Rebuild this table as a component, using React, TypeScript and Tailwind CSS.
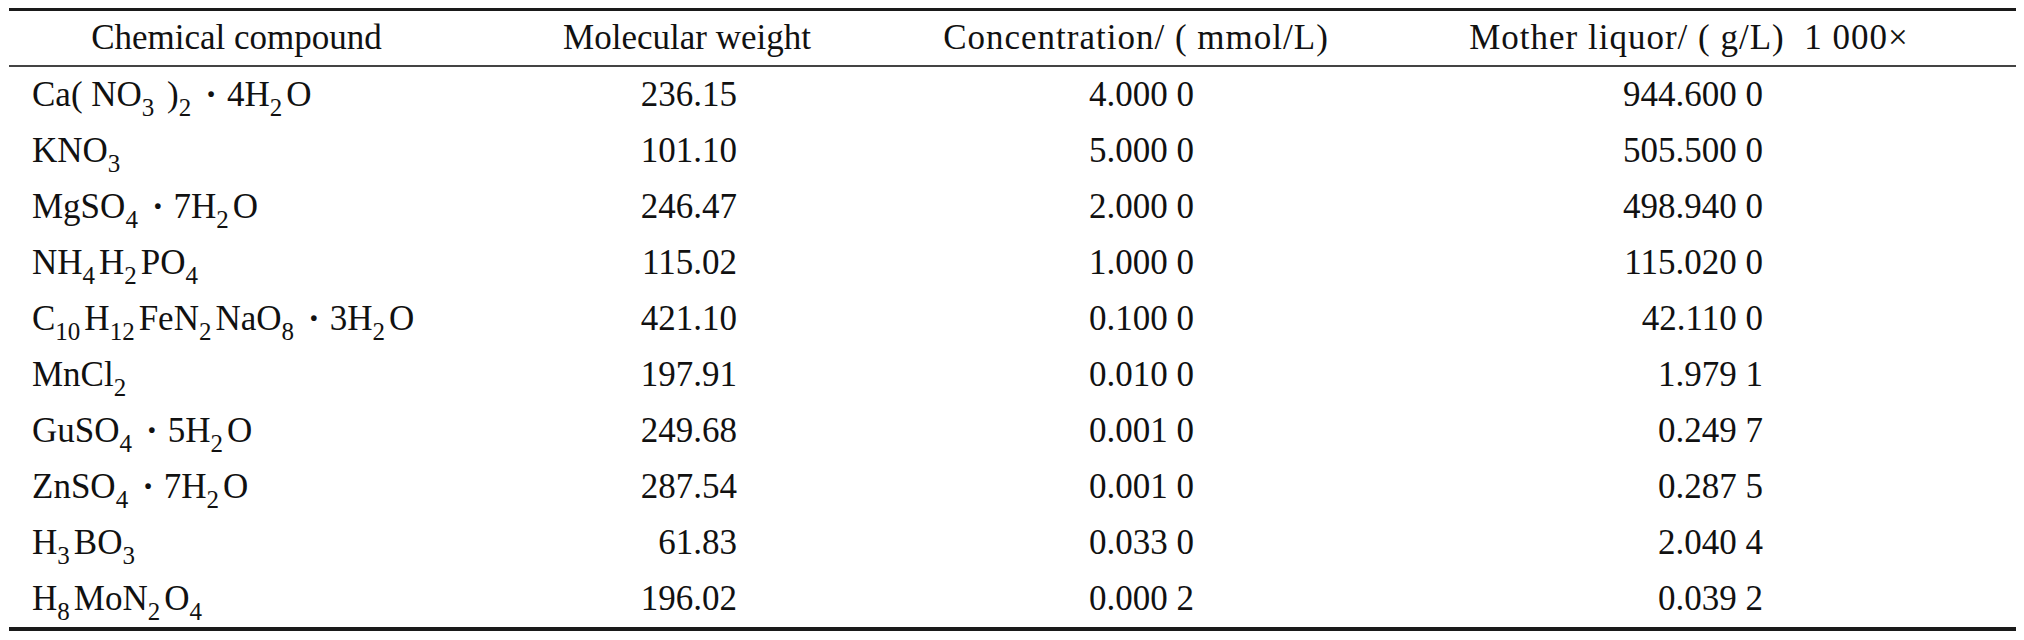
import type { ReactNode } from "react";

const S = ({ children }: { children: ReactNode }) => (
  <sub className="text-[25px] bottom-[-10px] mr-[4px]">{children}</sub>
);

const Dot = () => <span className="mx-[10px] font-bold">·</span>;

const rows: { name: ReactNode; mw: string; conc: string; mother: string }[] = [
  {
    name: (
      <>
        Ca( NO<S>3</S> )<S>2</S>
        <Dot />
        4H<S>2</S>O
      </>
    ),
    mw: "236.15",
    conc: "4.000 0",
    mother: "944.600 0",
  },
  {
    name: (
      <>
        KNO<S>3</S>
      </>
    ),
    mw: "101.10",
    conc: "5.000 0",
    mother: "505.500 0",
  },
  {
    name: (
      <>
        MgSO<S>4</S>
        <Dot />
        7H<S>2</S>O
      </>
    ),
    mw: "246.47",
    conc: "2.000 0",
    mother: "498.940 0",
  },
  {
    name: (
      <>
        NH<S>4</S>H<S>2</S>PO<S>4</S>
      </>
    ),
    mw: "115.02",
    conc: "1.000 0",
    mother: "115.020 0",
  },
  {
    name: (
      <>
        C<S>10</S>H<S>12</S>FeN<S>2</S>NaO<S>8</S>
        <Dot />
        3H<S>2</S>O
      </>
    ),
    mw: "421.10",
    conc: "0.100 0",
    mother: "42.110 0",
  },
  {
    name: (
      <>
        MnCl<S>2</S>
      </>
    ),
    mw: "197.91",
    conc: "0.010 0",
    mother: "1.979 1",
  },
  {
    name: (
      <>
        GuSO<S>4</S>
        <Dot />
        5H<S>2</S>O
      </>
    ),
    mw: "249.68",
    conc: "0.001 0",
    mother: "0.249 7",
  },
  {
    name: (
      <>
        ZnSO<S>4</S>
        <Dot />
        7H<S>2</S>O
      </>
    ),
    mw: "287.54",
    conc: "0.001 0",
    mother: "0.287 5",
  },
  {
    name: (
      <>
        H<S>3</S>BO<S>3</S>
      </>
    ),
    mw: "61.83",
    conc: "0.033 0",
    mother: "2.040 4",
  },
  {
    name: (
      <>
        H<S>8</S>MoN<S>2</S>O<S>4</S>
      </>
    ),
    mw: "196.02",
    conc: "0.000 2",
    mother: "0.039 2",
  },
];

export default function App() {
  return (
    <div className="w-[2024px] h-[640px] bg-white pt-[8px] pl-[9px] font-['Liberation_Serif',serif] text-[35px] text-[#111]">
      <table className="w-[2007px] border-collapse table-fixed border-t-[3px] border-b-[4px] border-[#1a1a1a]">
        <colgroup>
          <col className="w-[455px]" />
          <col className="w-[446px]" />
          <col className="w-[452px]" />
          <col className="w-[654px]" />
        </colgroup>
        <thead>
          <tr className="h-[54px] border-b-2 border-[#444]">
            <th className="font-normal text-center leading-[54px]">Chemical compound</th>
            <th className="font-normal text-center leading-[54px]">Molecular weight</th>
            <th className="font-normal text-center leading-[54px] tracking-[1px] whitespace-pre">
              Concentration/ ( mmol/L)
            </th>
            <th className="font-normal text-center leading-[54px] tracking-[1px] whitespace-pre">
              Mother liquor/ ( g/L)  1 000×
            </th>
          </tr>
        </thead>
        <tbody>
          {rows.map((r, i) => (
            <tr key={i} className="h-[56px]">
              <td className="pl-[23px] leading-[56px] whitespace-nowrap">{r.name}</td>
              <td className="pr-[173px] text-right leading-[56px]">{r.mw}</td>
              <td className="pr-[168px] text-right leading-[56px] whitespace-pre">{r.conc}</td>
              <td className="pr-[253px] text-right leading-[56px] whitespace-pre">{r.mother}</td>
            </tr>
          ))}
        </tbody>
      </table>
    </div>
  );
}
